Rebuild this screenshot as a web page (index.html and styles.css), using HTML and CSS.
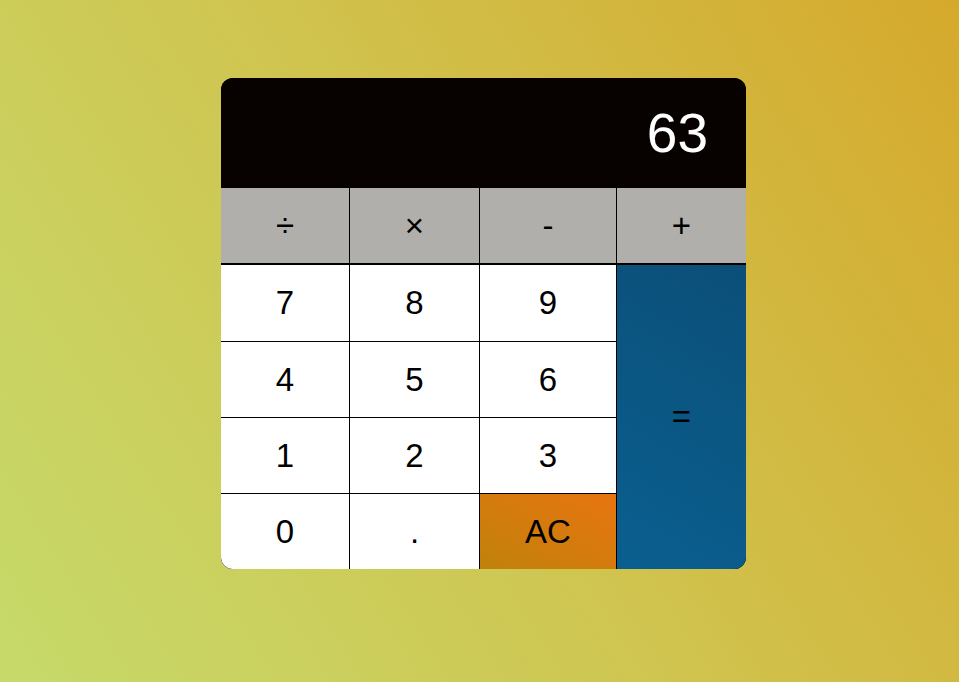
FILE: index.html
```html
<!DOCTYPE html>
<html lang="en">
<head>
<meta charset="utf-8">
<title>Calculator</title>
<link rel="stylesheet" href="styles.css">
</head>
<body>
<div class="page">
  <div class="calc">
    <div class="display">63</div>
    <div class="keys">
      <button class="key op">÷</button>
      <button class="key op">×</button>
      <button class="key op">-</button>
      <button class="key op">+</button>
      <button class="key">7</button>
      <button class="key">8</button>
      <button class="key">9</button>
      <button class="key equals">=</button>
      <button class="key">4</button>
      <button class="key">5</button>
      <button class="key">6</button>
      <button class="key">1</button>
      <button class="key">2</button>
      <button class="key">3</button>
      <button class="key">0</button>
      <button class="key">.</button>
      <button class="key clear">AC</button>
    </div>
  </div>
</div>
</body>
</html>
```
FILE: styles.css
```css
* { box-sizing: border-box; }
html, body {
  margin: 0;
  height: 100%;
}
body {
  font-family: "Liberation Sans", Arial, sans-serif;
  background: linear-gradient(58deg, #c6da6a 0%, #cfc652 45%, #d5a92c 100%);
}
.page {
  padding: 78px 0 0 221px;
  display: flex;
}
.calc {
  width: 525px;
  border-radius: 12px;
  overflow: hidden;
  background: #000;
}
.display {
  height: 110px;
  background: #070100;
  color: #fff;
  font-size: 55px;
  display: flex;
  align-items: center;
  justify-content: flex-end;
  padding-right: 38px;
}
.keys {
  display: grid;
  grid-template-columns: 128px 129px 136px 129px;
  grid-template-rows: 76px 76px 75px 75px 75px;
  gap: 1px;
  background: #000;
}
.key {
  border: 0;
  margin: 0;
  padding: 0;
  font-family: inherit;
  font-size: 33px;
  color: #000;
  background: #fff;
  display: flex;
  align-items: center;
  justify-content: center;
}
.key.op {
  background: #b0afab;
  border-bottom: 1px solid #000;
}
.key.equals {
  grid-column: 4;
  grid-row: 2 / span 4;
  background: linear-gradient(30deg, #0a5f90 0%, #0b4f78 100%);
}
.key.clear {
  background: linear-gradient(30deg, #c0820a 0%, #e8740f 100%);
}
```
